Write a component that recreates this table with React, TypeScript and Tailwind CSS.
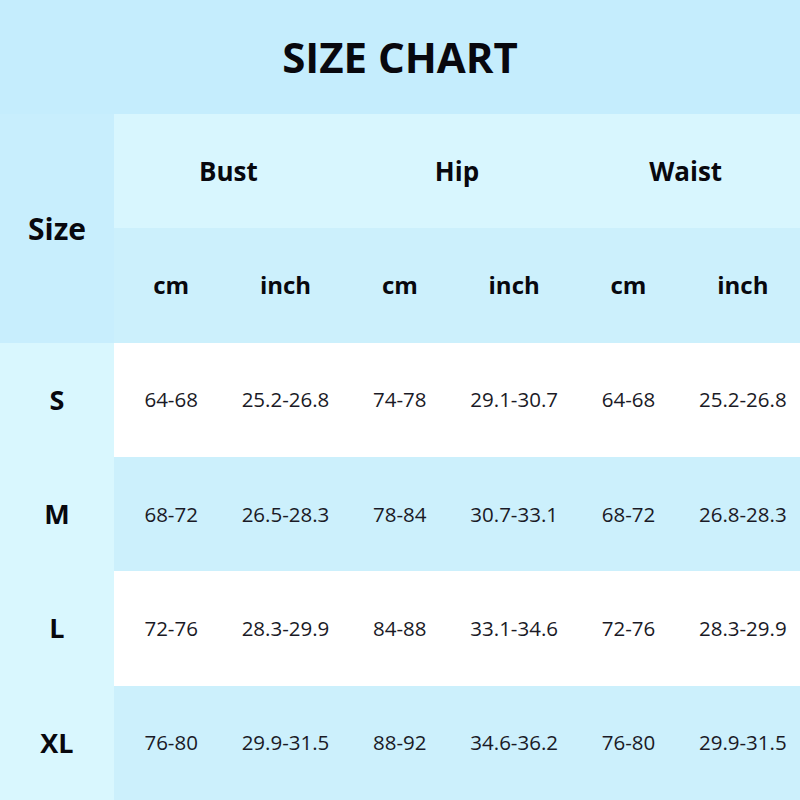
const sizes = [
    { label: "S", vals: ["64-68", "25.2-26.8", "74-78", "29.1-30.7", "64-68", "25.2-26.8"] },
    { label: "M", vals: ["68-72", "26.5-28.3", "78-84", "30.7-33.1", "68-72", "26.8-28.3"] },
    { label: "L", vals: ["72-76", "28.3-29.9", "84-88", "33.1-34.6", "72-76", "28.3-29.9"] },
    { label: "XL", vals: ["76-80", "29.9-31.5", "88-92", "34.6-36.2", "76-80", "29.9-31.5"] },
];

const measures = ["Bust", "Hip", "Waist"];
const units = ["cm", "inch", "cm", "inch", "cm", "inch"];

export default function App() {
    return (
        <div className="w-[800px] h-[800px] flex flex-col text-[#08080e] font-['Open_Sans',sans-serif]">
            {/* TITLE */}
            <div className="h-[114px] bg-[#c5edfd] flex items-center justify-center">
                <h1 className="text-[42px] font-bold leading-none">SIZE CHART</h1>
            </div>

            {/* TABLE */}
            <div className="flex-1 grid grid-cols-[114px_repeat(6,1fr)] grid-rows-[repeat(6,1fr)]">
                {/* size header spans two rows */}
                <div className="row-span-2 bg-[#c8eefd] flex items-center justify-center">
                    <span className="text-[30px] font-bold">Size</span>
                </div>
                {measures.map((m) => (
                    <div
                        key={m}
                        className="col-span-2 bg-[#d8f6fe] flex items-center justify-center"
                    >
                        <span className="text-[26px] font-bold">{m}</span>
                    </div>
                ))}
                {units.map((u, i) => (
                    <div key={i} className="bg-[#ccf0fc] flex items-center justify-center">
                        <span className="text-[24px] font-bold">{u}</span>
                    </div>
                ))}

                {/* DATA ROWS */}
                {sizes.map((s, r) => (
                    <div key={s.label} className="contents">
                        <div className="bg-[#d9f7fe] flex items-center justify-center">
                            <span className="text-[27px] font-bold">{s.label}</span>
                        </div>
                        {s.vals.map((v, i) => (
                            <div
                                key={i}
                                className={`flex items-center justify-center ${
                                    r % 2 === 0 ? "bg-white" : "bg-[#ccf0fc]"
                                }`}
                            >
                                <span className="text-[20.5px] text-[#1a1a26]">{v}</span>
                            </div>
                        ))}
                    </div>
                ))}
            </div>
        </div>
    );
}
